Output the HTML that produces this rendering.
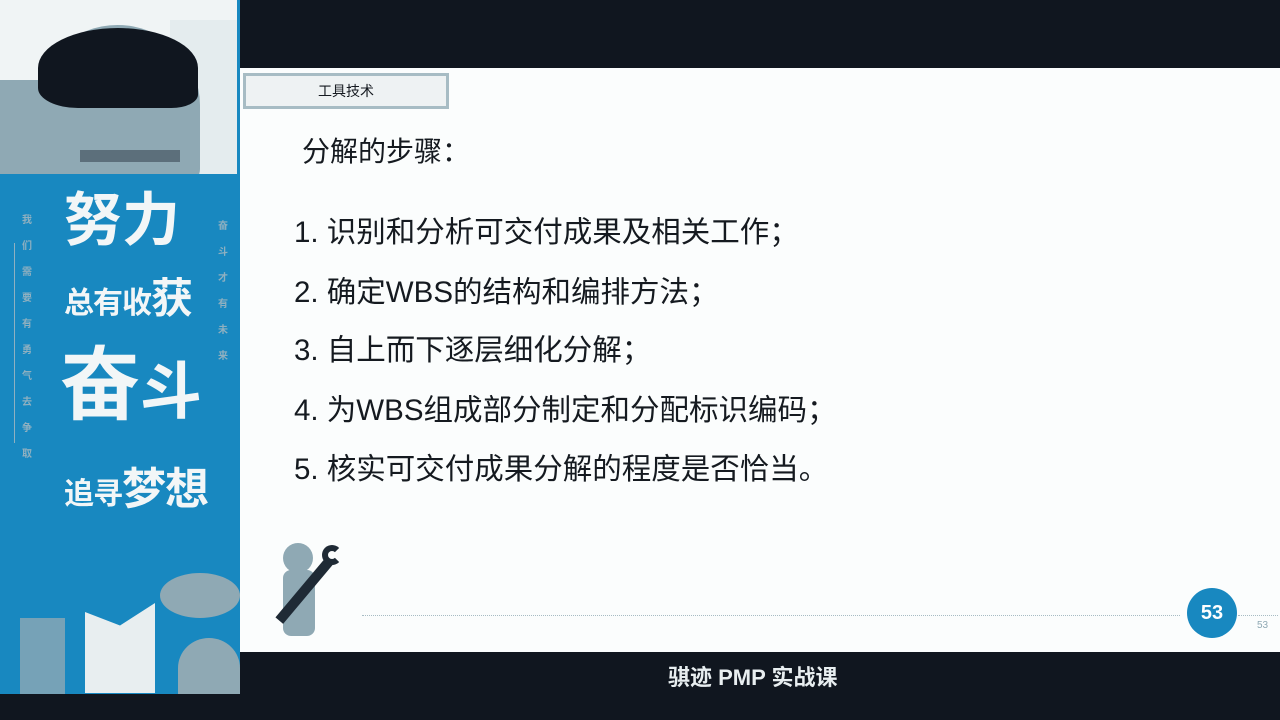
<!DOCTYPE html>
<html><head><meta charset="utf-8"><style>
*{margin:0;padding:0;box-sizing:border-box}
body{width:1280px;height:720px;background:#10161f;position:relative;overflow:hidden;font-family:"Liberation Sans","Noto Sans CJK SC",sans-serif}
.abs{position:absolute}
.slide{left:240px;top:68px;width:1040px;height:584px;background:#fbfdfd}
.item{position:absolute;left:294px;font-size:29.5px;color:#151a20;white-space:nowrap;line-height:1}
.p{position:absolute;white-space:nowrap;line-height:1}
</style></head><body>
<!-- webcam -->
<div class="abs" style="left:0;top:0;width:240px;height:178px;background:#8fa9b4;border-right:3px solid #1888c0;border-bottom:4px solid #1888c0;overflow:hidden">
 <div class="abs" style="left:0;top:0;width:240px;height:80px;background:#f0f4f5"></div>
 <div class="abs" style="left:170px;top:20px;width:70px;height:158px;background:#e4ecee"></div>
 <div class="abs" style="left:35px;top:25px;width:165px;height:160px;background:#8fa9b4;border-radius:50% 50% 10% 10%"></div>
 <div class="abs" style="left:38px;top:28px;width:160px;height:80px;background:#10161f;border-radius:60% 60% 20% 30%"></div>
 <div class="abs" style="left:80px;top:150px;width:100px;height:12px;background:#3a4a55;opacity:.6"></div>
</div>
<!-- poster -->
<div class="abs" style="left:0;top:178px;width:240px;height:516px;background:#1888c0;overflow:hidden;color:#f2f6f7;font-weight:bold">
 <div class="p" style="left:64px;top:14px;font-size:58px">努力</div>
 <div class="p" style="left:64px;top:100px;font-size:30px;letter-spacing:-1px">总有收<span style="font-size:42px">获</span></div>
 <div class="p" style="left:60px;top:168px;font-size:62px"><span style="font-size:80px">奋</span>斗</div>
 <div class="p" style="left:64px;top:290px;font-size:30px;letter-spacing:-1px">追寻<span style="font-size:44px">梦想</span></div>
 <div class="abs" style="left:14px;top:65px;width:1px;height:200px;background:#8fb0c0"></div>
 <div class="abs" style="left:22px;top:30px;width:10px;font-size:10px;color:#8fb0c0;line-height:26px">我们需要有勇气去争取</div>
 <div class="abs" style="left:218px;top:36px;width:10px;font-size:10px;color:#8fb0c0;line-height:26px">奋斗才有未来</div>
 <div class="abs" style="left:85px;top:425px;width:70px;height:90px;background:#e8eef0;clip-path:polygon(0 10%,50% 25%,100% 0,100% 100%,50% 100%,0 100%)"></div>
 <div class="abs" style="left:160px;top:395px;width:80px;height:45px;background:#8fa9b4;border-radius:50%"></div>
 <div class="abs" style="left:178px;top:460px;width:62px;height:60px;background:#8fa9b4;border-radius:50% 50% 0 0"></div>
 <div class="abs" style="left:20px;top:440px;width:45px;height:76px;background:#8fa9b4;opacity:.8"></div>
</div>
<!-- slide -->
<div class="abs slide"></div>
<div class="abs" style="left:243px;top:73px;width:206px;height:36px;background:#eef2f3;border:3px solid #a7bcc4;font-size:14px;color:#151a20;text-align:center;line-height:30px">工具技术</div>
<div class="abs" style="left:302px;top:138px;font-size:28px;color:#151a20;line-height:1">分解的步骤：</div>
<div class="item" style="top:218px">1. 识别和分析可交付成果及相关工作；</div>
<div class="item" style="top:278px">2. 确定WBS的结构和编排方法；</div>
<div class="item" style="top:336px">3. 自上而下逐层细化分解；</div>
<div class="item" style="top:396px">4. 为WBS组成部分制定和分配标识编码；</div>
<div class="item" style="top:455px">5. 核实可交付成果分解的程度是否恰当。</div>
<!-- wrench man -->
<div class="abs" style="left:283px;top:543px;width:30px;height:30px;border-radius:50%;background:#8fa9b4"></div>
<div class="abs" style="left:283px;top:570px;width:32px;height:66px;background:#8fa9b4;border-radius:8px"></div>
<div class="abs" style="left:300px;top:550px;width:10px;height:80px;background:#1f2a35;transform:rotate(40deg)"></div>
<div class="abs" style="left:322px;top:545px;width:20px;height:20px;border:6px solid #1f2a35;border-radius:50%;border-right-color:transparent"></div>
<div class="abs" style="left:362px;top:615px;width:818px;border-top:1px dotted #a7bcc4"></div>
<div class="abs" style="left:1238px;top:615px;width:40px;border-top:1px dotted #a7bcc4"></div>
<div class="abs" style="left:1187px;top:588px;width:50px;height:50px;border-radius:50%;background:#1888c0;color:#fff;font-size:20px;font-weight:bold;text-align:center;line-height:50px">53</div>
<div class="abs" style="left:1257px;top:620px;font-size:10px;color:#8fa9b4">53</div>
<div class="p" style="left:668px;top:667px;font-size:22px;font-weight:bold;color:#e8eef0">骐迹 PMP 实战课</div>
</body></html>
